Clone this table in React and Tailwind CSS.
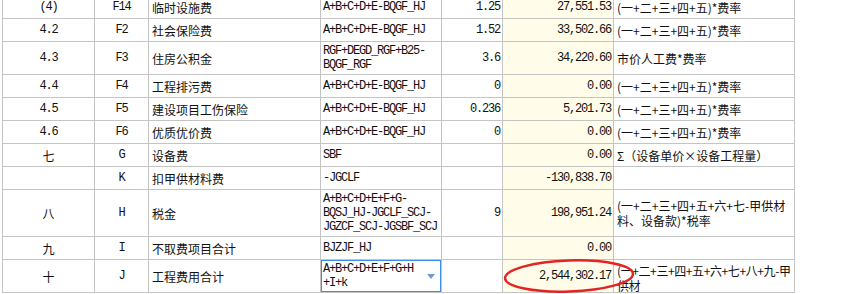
import React from 'react';

const mono = "font-['Liberation_Mono','Noto_Sans_CJK_SC',monospace] text-[12px] tracking-[-1.2px] leading-[14px]";
const cjk = "font-['Noto_Sans_CJK_SC',sans-serif] text-[12px] leading-[15px]";
const line = "border-r border-b border-[#c4c4c4] flex items-center overflow-hidden text-[#111]";

const rate5 = ['(一+二+三+四+五)*费率'];

const rows = [
    { a: '(4)', b: 'F14', c: '临时设施费', d: ['A+B+C+D+E-BQGF_HJ'], e: '1.25', f: '27,551.53', g: rate5 },
    { a: '4.2', b: 'F2', c: '社会保险费', d: ['A+B+C+D+E-BQGF_HJ'], e: '1.52', f: '33,502.66', g: rate5 },
    { a: '4.3', b: 'F3', c: '住房公积金', d: ['RGF+DEGD_RGF+B25-', 'BQGF_RGF'], e: '3.6', f: '34,220.60', g: ['市价人工费*费率'] },
    { a: '4.4', b: 'F4', c: '工程排污费', d: ['A+B+C+D+E-BQGF_HJ'], e: '0', f: '0.00', g: rate5 },
    { a: '4.5', b: 'F5', c: '建设项目工伤保险', d: ['A+B+C+D+E-BQGF_HJ'], e: '0.236', f: '5,201.73', g: rate5 },
    { a: '4.6', b: 'F6', c: '优质优价费', d: ['A+B+C+D+E-BQGF_HJ'], e: '0', f: '0.00', g: rate5 },
    { a: '七', b: 'G', c: '设备费', d: ['SBF'], e: '', f: '0.00', g: ['Σ（设备单价×设备工程量）'] },
    { a: '', b: 'K', c: '扣甲供材料费', d: ['-JGCLF'], e: '', f: '-130,838.70', g: [] },
    { a: '八', b: 'H', c: '税金', d: ['A+B+C+D+E+F+G-', 'BQSJ_HJ-JGCLF_SCJ-', 'JGZCF_SCJ-JGSBF_SCJ'], e: '9', f: '198,951.24', g: ['(一+二+三+四+五+六+七-甲供材', '料、设备款)*税率'] },
    { a: '九', b: 'I', c: '不取费项目合计', d: ['BJZJF_HJ'], e: '', f: '0.00', g: [] },
    { a: '十', b: 'J', c: '工程费用合计', d: ['A+B+C+D+E+F+G+H', '+I+k'], e: '', f: '2,544,302.17', g: ['(一+二+三+四+五+六+七+八+九-甲', '供材'], selected: true },
];

function Lines({ items }) {
    return (
        <div className="whitespace-nowrap">
            {items.map((t, i) => <div key={i}>{t}</div>)}
        </div>
    );
}

export default function App() {
    return (
        <div className="relative w-[857px] h-[294px] overflow-hidden bg-white">
            <div className="grid grid-cols-[92px_54px_172px_121px_61px_111px_181px] grid-rows-[23px_23px_33px_23px_23px_23px_23px_23px_47px_23px_33px] w-max ml-[2px] -mt-[4px] border-l border-[#c4c4c4]">
                {rows.map((r, i) => (
                    <React.Fragment key={i}>
                        <div className={`${line} relative justify-center ${/[\u4e00-\u9fff]/.test(r.a) ? cjk : mono}`}>
                            {r.a}
                            {r.selected && <div className="absolute -left-[2px] -top-[1px] -bottom-[1px] w-[2px] bg-[#3b8fe6]" />}
                        </div>
                        <div className={`${line} justify-center ${mono}`}>{r.b}</div>
                        <div className={`${line} px-[3px] ${cjk}`}>{r.c}</div>
                        <div className={`${line} relative pl-[2px] ${mono} ${r.d.length === 3 ? 'leading-[13px]' : ''}`}>
                            <Lines items={r.d} />
                            {r.selected && (
                                <div className="absolute -left-[1px] -top-[1px] -right-[1px] -bottom-[1px] border-2 border-[#3b8fe6] flex items-center justify-end pr-[5px]">
                                    <svg width="8" height="5" viewBox="0 0 8 5">
                                        <path d="M0 0 L8 0 L4 5 Z" fill="#6e9cd2" />
                                    </svg>
                                </div>
                            )}
                        </div>
                        <div className={`${line} justify-end pr-[2px] ${mono}`}>{r.e}</div>
                        <div className={`${line} justify-end pr-[2px] bg-[#fffde9] ${mono}`}>{r.f}</div>
                        <div className={`${line} pl-[3px] ${cjk} ${r.selected ? 'items-start pt-[3px] leading-[14px] tracking-[-0.4px]' : ''}`}>
                            <Lines items={r.g} />
                        </div>
                    </React.Fragment>
                ))}
            </div>
            <svg className="absolute left-0 top-0 pointer-events-none" width="857" height="294">
                <ellipse cx="569" cy="276" rx="64" ry="15.5" fill="none" stroke="#e32424" strokeWidth="2.5" transform="rotate(-2 569 276)" />
            </svg>
        </div>
    );
}
